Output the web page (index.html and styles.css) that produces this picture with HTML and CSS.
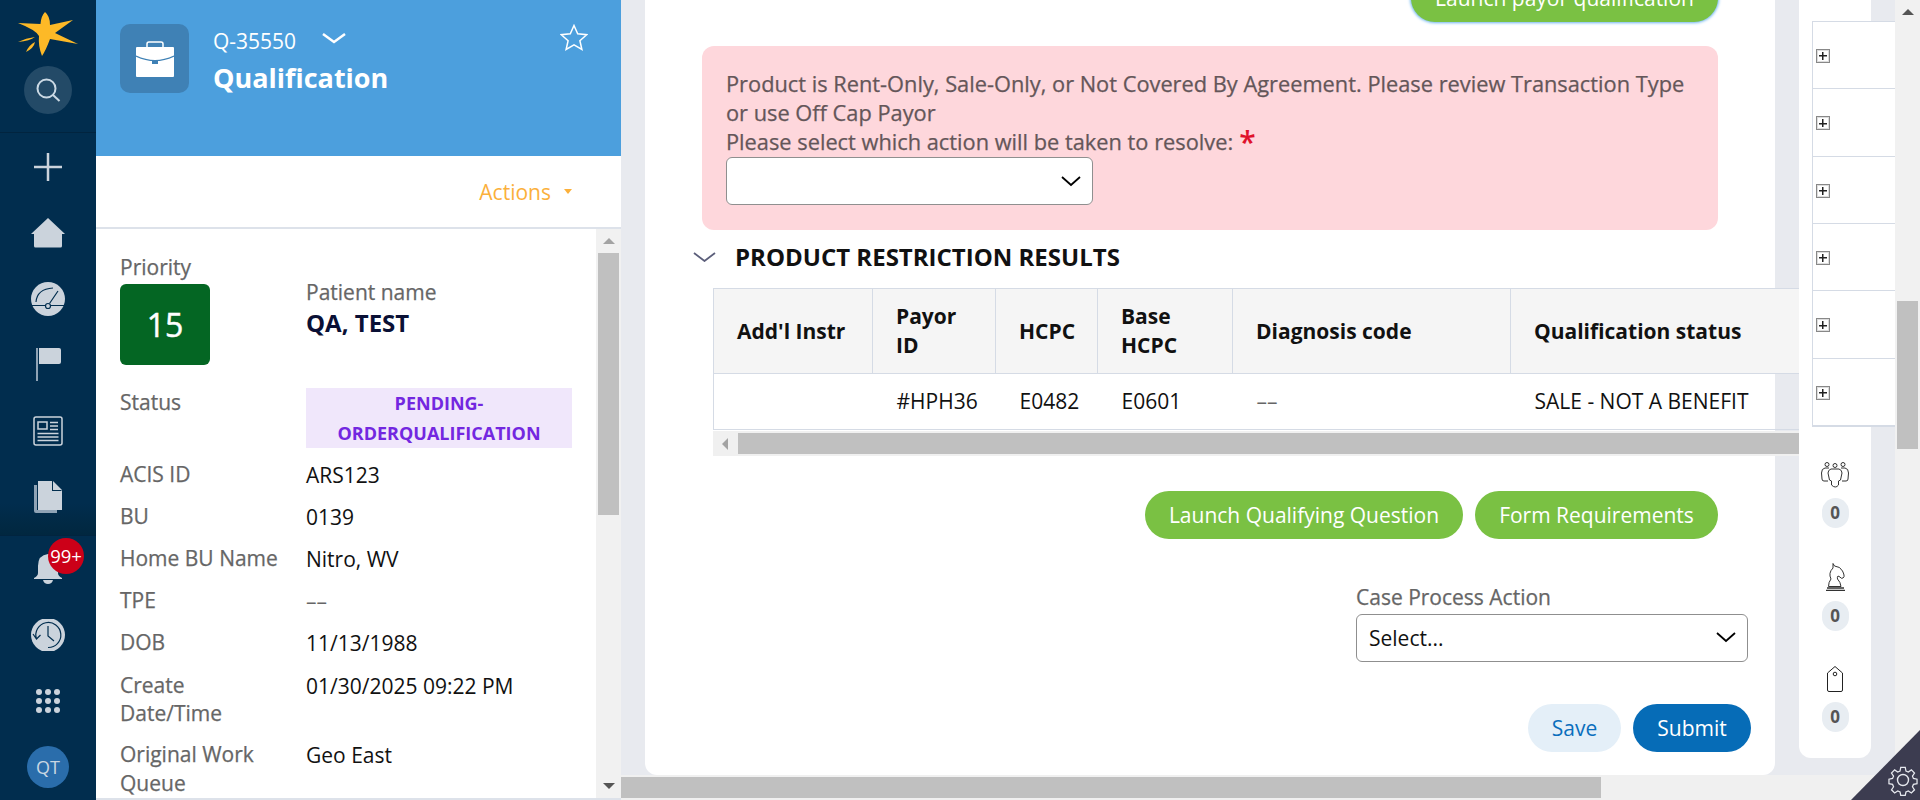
FILE: index.html
```html
<!DOCTYPE html>
<html lang="en">
<head>
<meta charset="utf-8">
<title>Qualification</title>
<link rel="stylesheet" href="styles.css">
</head>
<body>
<div class="app">
  <nav class="nav">
    <div class="nav-top">
      <svg class="logo" viewBox="18 12 60 44" width="60" height="44"><path fill="#fdb927" d="M18 23 L40.500 24 Q41 16 45 12 Q50 16 50 25 L73 20 L55 33 L78 44 L50 39 Q46 50 42 56 Q38 46 39 36 Q36 30 18 23Z M18 42 Q26 38 35 37 Q30 41 18 42Z M26 52 Q29 45 35 42 Q34 48 26 52Z"/></svg>
      <div class="search"><svg viewBox="0 0 26 26" width="26" height="26" fill="none" stroke="#cbd9e4" stroke-width="2"><circle cx="11.500" cy="11.500" r="9"/><path d="M18 18l6.500 6"/></svg></div>
    </div>
    <div class="nav-mid">
      <div class="nav-item"><svg viewBox="0 0 28 28" width="28" height="28"><path fill="none" stroke="#cbd3dc" stroke-width="2.500" d="M14 0v28M0 14h28"/></svg></div>
      <div class="nav-item"><svg viewBox="0 0 34 30" width="34" height="30"><path fill="#cbd3dc" d="M17 0L34 16h-3v12q0 1.500-1.500 1.500h-25Q3 29.500 3 28V16H0Z"/></svg></div>
      <div class="nav-item"><svg viewBox="0 0 34 34" width="34" height="34"><circle cx="17" cy="17" r="17" fill="#cbd3dc"/><path fill="none" stroke="#012d4e" stroke-width="1.200" d="M0 23.500h14M20 23.500h14M5 20Q6 7 22 6M18.500 21.500L27 9"/><circle cx="17" cy="24" r="2.500" fill="#cbd3dc" stroke="#012d4e" stroke-width="1.200"/></svg></div>
      <div class="nav-item"><svg viewBox="0 0 25 33" width="25" height="33"><path fill="#8fa3b5" d="M0 0h2v33H0z"/><path fill="#cbd3dc" d="M3 0h20q2 0 2 2v12q0 2-2 2H3z"/></svg></div>
      <div class="nav-item"><svg viewBox="0 0 30 30" width="30" height="30" fill="none" stroke="#cbd3dc" stroke-width="1.500"><rect x="1" y="1" width="28" height="28" rx="2"/><rect x="5" y="6" width="9" height="7"/><path d="M17 6.500h8M17 10h8M17 13.500h8M4.500 17.500h21M4.500 21h21M4.500 24.500h21"/></svg></div>
      <div class="nav-item"><svg viewBox="0 0 28 32" width="28" height="32"><path fill="#8fa3b5" d="M0 4h3v25h20v3H2q-2 0-2-2z"/><path fill="#cbd3dc" d="M4 0h15l9 9v20H4z"/><path fill="#012d4e" d="M19 0v9h9l-1 1h-9V0z"/></svg></div>
    </div>
    <div class="nav-bottom">
      <div class="nav-item bell"><svg viewBox="0 0 28 30" width="28" height="30"><path fill="#cbd3dc" d="M14 0q10 1 10 12v7q0 3 4 5v1H0v-1q4-2 4-5v-7Q4 1 14 0zM9 26h10q-1 4-5 4t-5-4z"/></svg><span class="badge">99+</span></div>
      <div class="nav-item"><svg viewBox="0 0 34 32" width="34" height="32"><circle cx="17" cy="16" r="17" fill="#cbd3dc"/><path fill="none" stroke="#012d4e" stroke-width="1.200" d="M5.500 20A12.500 12.500 0 1 1 17 28.500M17 7v10l6 5M2 15l3.500 5 4-4"/></svg></div>
      <div class="nav-item"><div class="dots"><i></i><i></i><i></i><i></i><i></i><i></i><i></i><i></i><i></i></div></div>
      <div class="nav-item"><span class="avatar">QT</span></div>
    </div>
  </nav>

  <aside class="panel">
    <header class="case-head">
      <div class="case-icon"><svg viewBox="0 0 38 36" width="38" height="36"><path fill="none" stroke="#fff" stroke-width="1.500" d="M11 7V3q0-2 2-2h12q2 0 2 2v4"/><rect y="6" width="38" height="30" rx="1" fill="#fff"/><path fill="none" stroke="#3f81b5" stroke-width="1.200" d="M0 15Q19 24 38 15"/><rect x="16" y="19" width="6" height="4" fill="#3f81b5"/></svg></div>
      <div class="case-titles">
        <div class="case-id"><span>Q-35550</span><svg viewBox="0 0 24 11" width="24" height="11"><path fill="none" stroke="#fff" stroke-width="2.500" d="M1 1l11 8 11-8"/></svg></div>
        <div class="case-name">Qualification</div>
      </div>
      <svg class="star" viewBox="0 0 28 28" width="28" height="28"><path fill="none" stroke="#fff" stroke-width="1.500" d="M14 1.500l3.700 8.300 9 .9-6.800 6 2 8.800L14 20.900l-7.900 4.600 2-8.800-6.800-6 9-.9z"/></svg>
    </header>
    <div class="actions"><span>Actions</span><i class="caret"></i></div>
    <div class="details">
      <div class="details-body">
        <div class="top-row">
          <div><div class="lbl">Priority</div><div class="priority">15</div></div>
          <div class="patient"><div class="lbl">Patient name</div><div class="patient-name">QA, TEST</div></div>
        </div>
        <div class="row status-row"><div class="lbl">Status</div><div class="pill">PENDING-<br>ORDERQUALIFICATION</div></div>
        <div class="row"><div class="lbl">ACIS ID</div><div class="val">ARS123</div></div>
        <div class="row"><div class="lbl">BU</div><div class="val">0139</div></div>
        <div class="row"><div class="lbl">Home BU Name</div><div class="val">Nitro, WV</div></div>
        <div class="row"><div class="lbl">TPE</div><div class="val muted">––</div></div>
        <div class="row"><div class="lbl">DOB</div><div class="val">11/13/1988</div></div>
        <div class="row"><div class="lbl">Create Date/Time</div><div class="val">01/30/2025 09:22 PM</div></div>
        <div class="row"><div class="lbl">Original Work Queue</div><div class="val">Geo East</div></div>
      </div>
      <div class="vbar small"><i class="arrow up"></i><div class="thumb"></div><i class="arrow down"></i></div>
    </div>
  </aside>

  <main class="main">
    <div class="main-col">
      <div class="view">
        <section class="card">
          <div class="top-btn-row"><button class="btn green focus">Launch payor qualification</button></div>
          <div class="alert">
            <p>Product is Rent-Only, Sale-Only, or Not Covered By Agreement. Please review Transaction Type or use Off Cap Payor</p>
            <p>Please select which action will be taken to resolve:<span class="req">*</span></p>
            <div class="select short"><svg viewBox="0 0 20 11" width="20" height="11"><path fill="none" stroke="#000" stroke-width="1.800" d="M1 1l9 8 9-8"/></svg></div>
          </div>
          <h2 class="section-title"><svg viewBox="0 0 23 10" width="23" height="10"><path fill="none" stroke="#5b5e7a" stroke-width="1.800" d="M1 1l10.500 8L22 1"/></svg><span>PRODUCT RESTRICTION RESULTS</span></h2>
          <div class="table-wrap">
            <table class="results">
              <colgroup><col class="c1"><col class="c2"><col class="c3"><col class="c4"><col class="c5"><col class="c6"></colgroup>
              <thead><tr><th>Add'l Instr</th><th>Payor ID</th><th>HCPC</th><th>Base HCPC</th><th>Diagnosis code</th><th>Qualification status</th></tr></thead>
              <tbody><tr><td></td><td>#HPH36</td><td>E0482</td><td>E0601</td><td class="muted">––</td><td>SALE - NOT A BENEFIT</td></tr></tbody>
            </table>
            <div class="hbar inner"><i class="arrow left"></i><div class="thumb"></div></div>
          </div>
          <div class="btn-row"><button class="btn green q">Launch Qualifying Question</button><button class="btn green r">Form Requirements</button></div>
          <div class="process">
            <label class="lbl">Case Process Action</label>
            <div class="select wide"><span>Select...</span><svg viewBox="0 0 20 11" width="20" height="11"><path fill="none" stroke="#000" stroke-width="1.800" d="M1 1l9 8 9-8"/></svg></div>
          </div>
          <div class="submit-row"><button class="btn save">Save</button><button class="btn submit">Submit</button></div>
        </section>
        <aside class="rail">
          <div class="rail-table">
            <div class="rail-row"><i class="plus"></i></div><div class="rail-row"><i class="plus"></i></div><div class="rail-row"><i class="plus"></i></div><div class="rail-row"><i class="plus"></i></div><div class="rail-row"><i class="plus"></i></div><div class="rail-row"><i class="plus"></i></div>
          </div>
          <div class="rail-item"><svg class="ic-people" viewBox="0 0 28 26" width="28" height="26" fill="none" stroke="#333" stroke-width="1"><circle cx="6" cy="2.500" r="2"/><circle cx="14" cy="3.500" r="2"/><circle cx="22" cy="2.500" r="2"/><path d="M8 6H4Q.5 6.500 .5 11l.5 6q0 2 2 2h4M20 6h4q3.500.5 3.500 5l-.5 6q0 2-2 2h-4M10 7h8q3 1 3 4l-1.500 7-2 1v4q-3 4-7 0v-4l-2-1L7 11q0-3 3-4z"/></svg><span class="count">0</span></div>
          <div class="rail-item"><svg class="ic-knight" viewBox="0 0 19 28" width="19" height="28" fill="none" stroke="#333" stroke-width="1"><path d="M7 .5l1.500 2.500q6 .5 8 5 1 2 1.500 4 .5 2-1 3-2 1-3-1l-2-1q-1 1-.5 3 3 3 3.500 7.500H2.500Q2.500 19 5 16 2 10 7 5z"/><path stroke-width="1.500" d="M1 25h17M0 27.500h19"/></svg><span class="count">0</span></div>
          <div class="rail-item"><svg class="ic-tag" viewBox="0 0 16 26" width="16" height="26" fill="none" stroke="#222" stroke-width="1"><path d="M8 .5L15.500 7v17q0 1.500-1.500 1.500H2Q.5 25.500.5 24V7z"/><circle cx="8" cy="8" r="1.800"/></svg><span class="count">0</span></div>
        </aside>
      </div>
      <div class="hbar outer"><div class="thumb"></div></div>
    </div>
    <div class="vbar big"><i class="arrow up"></i><div class="thumb"></div></div>
    <div class="corner"><svg viewBox="0 0 32 32" width="32" height="32" fill="none" stroke="#e6e8ee" stroke-width="1.400"><circle cx="16" cy="16" r="5.500"/><path d="M13.500 2h5l.8 4 2.600 1.100 3.400-2.300 3.500 3.500-2.300 3.400 1.100 2.600 4 .8v5l-4 .8-1.100 2.600 2.300 3.400-3.500 3.500-3.400-2.300-2.600 1.100-.8 4h-5l-.8-4-2.600-1.100-3.400 2.300-3.500-3.500 2.300-3.400-1.100-2.600-4-.8v-5l4-.8 1.100-2.600-2.300-3.400 3.500-3.500 3.400 2.300 2.600-1.100z" transform="translate(1.600 1.600) scale(.9)"/></svg></div>
  </main>
</div>
</body>
</html>
```
FILE: styles.css
```css
* { box-sizing: border-box; }
html, body { margin: 0; height: 100%; overflow: hidden; }
body { font-family: "Open Sans", "Liberation Sans", sans-serif; font-size: 21px; color: #111; background: #e8eaef; }
button { font-family: inherit; border: 0; cursor: pointer; }
.app { display: flex; height: 800px; width: 1920px; }

/* navigation */
.nav { width: 96px; flex: none; background: #012d4e; display: flex; flex-direction: column; }
.nav-top { height: 133px; border-bottom: 1px solid #01243f; display: flex; flex-direction: column; align-items: center; padding-top: 12px; }
.search { width: 48px; height: 48px; margin-top: 10px; border-radius: 50%; background: #234a67; display: flex; align-items: center; justify-content: center; }
.nav-mid { height: 403px; padding-top: 1px; background: linear-gradient(to bottom, #012d4e 92%, #01273f 100%); }
.nav-item { height: 66px; display: flex; align-items: center; justify-content: center; position: relative; }
.nav-bottom { border-top: 1px solid #01243f; }
.badge { position: absolute; left: 48px; top: 2px; width: 36px; height: 36px; border-radius: 50%; background: #cc0018; color: #fff; font-size: 18.500px; line-height: 36px; text-align: center; }
.dots { display: grid; grid-template-columns: repeat(3, 6px); gap: 3px; }
.dots i { width: 6px; height: 6px; border-radius: 50%; background: #cbd3dc; }
.avatar { width: 42px; height: 42px; border-radius: 50%; background: #2a6dab; color: #c9d6e2; font-size: 18px; line-height: 42px; text-align: center; }

/* left panel */
.panel { width: 525px; flex: none; display: flex; flex-direction: column; background: #fff; }
.case-head { height: 156px; background: #4c9fdd; color: #fff; display: flex; padding: 24px 33px 0 24px; }
.case-icon { width: 69px; height: 69px; border-radius: 10px; background: #3f81b5; display: flex; align-items: center; justify-content: center; flex: none; }
.case-titles { margin-left: 24px; flex: 1; }
.case-id { display: flex; align-items: flex-start; gap: 26px; font-size: 21px; line-height: 34px; }
.case-id svg { margin-top: 9px; }
.case-name { font-size: 27px; font-weight: 700; line-height: 34px; margin-top: 3px; }
.actions { height: 73px; border-bottom: 2px solid #dde2ea; display: flex; align-items: center; justify-content: flex-end; padding: 0 49px 0 0; color: #fbb03b; font-size: 21px; gap: 13px; }
.caret { width: 0; height: 0; border: 4.500px solid transparent; border-top: 5px solid #fbb03b; border-bottom: 0; }
.details { flex: 1; min-height: 0; display: flex; border-bottom: 2px solid #dde2ea; }
.details-body { flex: 1; min-width: 0; padding: 24px 24px 0; overflow: hidden; }
.top-row { display: grid; grid-template-columns: 186px 1fr; }
.patient { padding-top: 25px; }
.lbl { color: #666; font-size: 21px; line-height: 28.800px; display: block; -webkit-text-stroke: .25px #666; }
.priority { width: 90px; height: 81px; margin-top: 2px; border-radius: 6px; background: #046623; color: #fff; font-size: 32px; -webkit-text-stroke: .5px #fff; display: flex; align-items: center; justify-content: center; }
.patient-name { font-size: 24px; font-weight: 700; color: #0a1035; line-height: 32px; }
.row { display: grid; grid-template-columns: 186px 1fr; margin-top: 12.300px; }
.row .lbl { padding-right: 20px; }
.status-row { margin-top: 23px; }
.pill { background: #f0e7fb; color: #7327e0; font-size: 18px; font-weight: 700; line-height: 30px; text-align: center; }
.val { font-size: 21px; line-height: 28.800px; margin-top: 1px; color: #111; }
.muted { color: #666; }
.vbar { background: #f1f1f1; display: flex; flex-direction: column; align-items: center; flex: none; }
.vbar .thumb { background: #c0c0c0; }
.small { width: 25px; padding-top: 9px; }
.small .thumb { width: 21px; height: 262px; margin-top: 9px; }
.small .down { margin-top: auto; margin-bottom: 9px; }
.big { width: 25px; padding-top: 9px; }
.big .thumb { width: 21px; height: 148px; margin-top: 286px; }
.arrow { width: 0; height: 0; display: block; border: 6px solid transparent; }
.arrow.up { border-top: 0; border-bottom: 6px solid #a3a3a3; }
.big .arrow.up { border-bottom-color: #555; }
.arrow.down { border-bottom: 0; border-top: 6px solid #555; }
.arrow.left { border-left: 0; border-right: 6px solid #a3a3a3; }

/* main */
.main { flex: 1; min-width: 0; display: flex; position: relative; }
.main-col { flex: 1; min-width: 0; display: flex; flex-direction: column; }
.view { height: 775px; display: flex; overflow: hidden; background: #e8eaef; }
.card { width: 1130px; margin-left: 24px; flex: none; background: #fff; border-radius: 0 0 12px 12px; padding: 0 57px; display: flex; flex-direction: column; }
.top-btn-row { display: flex; justify-content: flex-end; margin-top: -26px; }
.btn { height: 48px; border-radius: 24px; font-size: 21px; white-space: nowrap; }
.green { background: #7ac143; color: #fff; }
.focus { width: 307px; box-shadow: 0 0 3px 1px #6cb4ee; }
.alert { margin-top: 24px; height: 184px; background: #fed7dc; border-radius: 12px; padding: 23px 24px; color: #645659; font-size: 21.800px; line-height: 29px; -webkit-text-stroke: .25px #645659; }
.alert p { margin: 0; }
.req { color: #e0112b; font-size: 30px; font-weight: 600; margin-left: 6px; line-height: 0; vertical-align: -3px; -webkit-text-stroke: 0; }
.select { height: 48px; background: #fff; border: 1px solid #8f8f8f; border-radius: 6px; display: flex; align-items: center; justify-content: space-between; padding: 0 11px 0 12px; color: #111; }
.short { width: 367px; margin-top: 1px; justify-content: flex-end; }
.section-title { margin: 12px 0 0 -9px; height: 30px; display: flex; align-items: center; font-size: 24px; line-height: 30px; font-weight: 700; color: #111; gap: 19px; }
.table-wrap { margin: 16px 0 0 11px; width: 1086px; flex: none; overflow: hidden; position: relative; }
.results { border-collapse: collapse; table-layout: fixed; width: 1300px; }
.c1 { width: 159px; } .c2 { width: 123px; } .c3 { width: 102px; } .c4 { width: 135px; } .c5 { width: 278px; } .c6 { width: 503px; }
.results th { height: 85px; background: #f5f5f5; border: 1px solid #d5dbe5; font-size: 21px; line-height: 29px; font-weight: 700; color: #111; text-align: left; padding: 0 24px 0 23px; }
.results td { height: 56px; border: 1px solid #d5dbe5; border-left: 0; border-right: 0; font-size: 21px; padding: 0 24px 2px; color: #111; }
.results td:first-child { border-left: 1px solid #d5dbe5; }
.results td.muted { color: #666; }
.inner { height: 25px; margin-top: 1px; display: flex; align-items: center; padding-left: 9px; background: #f0f0f0; }
.hbar .thumb { background: #c0c0c0; height: 21px; }
.inner .thumb { flex: 1; margin-left: 10px; }
.btn-row { display: flex; justify-content: flex-end; gap: 12px; margin-top: 35px; }
.q { width: 318px; } .r { width: 243px; }
.process { align-self: flex-end; margin: 44px -30px 0 0; width: 392px; }
.wide { margin-top: 2px; }
.wide span { font-size: 21px; }
.submit-row { display: flex; justify-content: flex-end; gap: 12px; margin: 42px -33px 0 0; }
.save { width: 93px; background: #e4eff8; color: #0a6ebd; }
.submit { width: 118px; background: #066cb7; color: #fff; }
.outer { height: 25px; background: #f0f0f0; padding-top: 2px; }
.outer .thumb { width: 980px; }

/* right rail */
.rail { width: 72px; margin: 0 0 17px 24px; flex: none; background: #fff; border-radius: 0 0 12px 12px; display: flex; flex-direction: column; align-items: center; position: relative; z-index: 1; }
.rail-table { width: 83px; margin: 21px 0 0 13px; align-self: flex-start; height: 406px; flex: none; background: #fff; border-left: 1px solid #d5dbe5; border-bottom: 2px solid #d5dbe5; border-top: 1px solid #d5dbe5; display: flex; flex-direction: column; }
.rail-row { flex: 1; display: flex; align-items: center; padding: 2px 0 0 3px; border-bottom: 1px solid #d5dbe5; }
.rail-row:last-child { border-bottom: 0; }
.plus { width: 14px; height: 14px; border: 1px solid #888; box-shadow: inset 0 0 0 1px #ddd; background: linear-gradient(#222, #222) center / 8px 1.500px no-repeat, linear-gradient(#222, #222) center / 1.500px 8px no-repeat, #fff; display: block; }
.rail-item { display: flex; flex-direction: column; align-items: center; margin-top: 35px; }
.rail-item svg { flex: none; }
.count { width: 27px; height: 30px; margin-top: 10px; border-radius: 14px; background: #e8edf2; color: #555; font-size: 17px; font-weight: 700; line-height: 30px; text-align: center; flex: none; }

/* settings corner */
.corner { position: absolute; right: 0; bottom: 0; width: 69px; height: 70px; background: #3c3c50; clip-path: polygon(100% 0, 100% 100%, 0 100%); display: flex; align-items: flex-end; justify-content: flex-end; padding: 0 1px 4px 0; }
```
